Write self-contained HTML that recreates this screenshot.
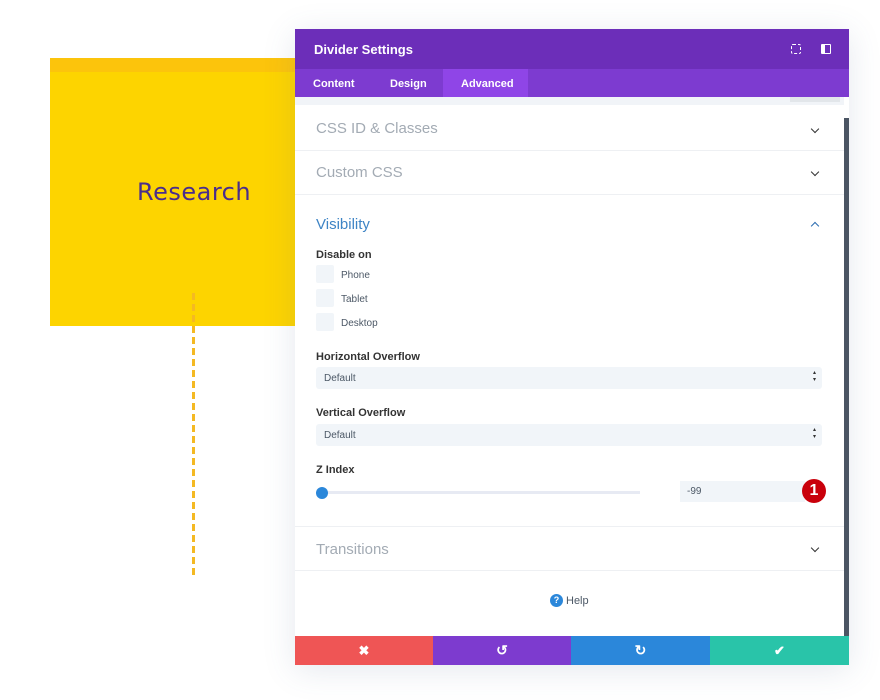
<!DOCTYPE html>
<html><head><style>
*{margin:0;padding:0;box-sizing:border-box}
body{width:880px;height:700px;background:#fff;font-family:"Liberation Sans",sans-serif;position:relative;overflow:hidden}
.abs{position:absolute}
.lbl{font-size:11px;color:#333;font-weight:bold;position:absolute;left:21px}
.sec{position:absolute;left:21px;font-size:15px;color:#a3abb4}
.cb{position:absolute;left:21px;width:18px;height:18px;background:#f1f5f9;border-radius:2px}
.cbt{position:absolute;left:46px;font-size:10px;color:#4c5866}
.sel{position:absolute;left:21px;width:506px;height:22px;background:#f1f5f9;border-radius:3px;font-size:10px;color:#4c5866;padding:6px 8px}
.sel:after{content:"\25B4\A\25BE";white-space:pre;position:absolute;right:6px;top:3px;font-size:6px;line-height:7px;color:#333}
.line{position:absolute;left:0;width:549px;height:1px;background:#eef0f3}
.chev{position:absolute;left:517px;width:6px;height:6px;border-right:1.6px solid #333;border-bottom:1.6px solid #333;transform:rotate(45deg)}
</style></head><body>
<div class="abs" style="left:50px;top:58px;width:245px;height:268px;background:#fdd400"></div>
<div class="abs" style="left:50px;top:58px;width:245px;height:14px;background:#fcc40c"></div>
<div class="abs" style="left:137px;top:178px;font-family:'DejaVu Sans',sans-serif;font-size:24px;color:#4a2d8c;letter-spacing:0.5px">Research</div>
<div class="abs" style="left:192px;top:293px;width:3px;height:285px;background:repeating-linear-gradient(#f4b923 0 7px,transparent 7px 11px)"></div>

<div class="abs" style="left:295px;top:29px;width:554px;height:636px;background:#fff;box-shadow:0 5px 30px rgba(80,100,140,.15);overflow:hidden">
 <div class="abs" style="left:0;top:0;width:554px;height:40px;background:#6c2eb9"></div>
 <div class="abs" style="left:19px;top:13px;font-size:13px;font-weight:bold;color:#fff">Divider Settings</div>
 <div class="abs" style="left:496px;top:15px;width:10px;height:10px;border:1.5px dashed #fff;border-radius:2px"></div>
 <div class="abs" style="left:526px;top:15px;width:10px;height:10px;border:1.5px solid #fff;border-radius:1px;border-left-width:4px"></div>
 <div class="abs" style="left:0;top:40px;width:554px;height:28px;background:#7d3bd0"></div>
 <div class="abs" style="left:148px;top:40px;width:85px;height:28px;background:#8f45e7"></div>
 <div class="abs" style="left:18px;top:49px;font-size:11px;font-weight:bold;color:#fff">Content</div>
 <div class="abs" style="left:95px;top:49px;font-size:11px;font-weight:bold;color:#fff">Design</div>
 <div class="abs" style="left:166px;top:49px;font-size:11px;font-weight:bold;color:#fff">Advanced</div>
 <div class="abs" style="left:0;top:68px;width:549px;height:8px;background:#f1f4f8"></div>
 <div class="abs" style="left:495px;top:68px;width:50px;height:5px;background:#e2e6ea"></div>
 <div class="abs" style="left:549px;top:89px;width:5px;height:518px;background:#4b5563"></div>
 <div style="position:absolute;left:0;top:0;width:549px">
  <div class="sec" style="top:91px">CSS ID &amp; Classes</div><div class="chev" style="top:97px"></div>
  <div class="line" style="top:121px"></div>
  <div class="sec" style="top:135px">Custom CSS</div><div class="chev" style="top:140px"></div>
  <div class="line" style="top:165px"></div>
  <div class="sec" style="top:187px;color:#3e84c5;font-size:15px">Visibility</div>
  <div class="chev" style="top:194px;transform:rotate(225deg);border-color:#2b6cb0"></div>
  <div class="lbl" style="top:220px">Disable on</div>
  <div class="cb" style="top:236px"></div><div class="cbt" style="top:241px">Phone</div>
  <div class="cb" style="top:260px"></div><div class="cbt" style="top:265px">Tablet</div>
  <div class="cb" style="top:284px"></div><div class="cbt" style="top:289px">Desktop</div>
  <div class="lbl" style="top:322px">Horizontal Overflow</div>
  <div class="sel" style="top:338px">Default</div>
  <div class="lbl" style="top:378px">Vertical Overflow</div>
  <div class="sel" style="top:395px">Default</div>
  <div class="lbl" style="top:435px">Z Index</div>
  <div class="abs" style="left:24px;top:462px;width:321px;height:3px;background:#e7eaf3"></div>
  <div class="abs" style="left:21px;top:458px;width:12px;height:12px;border-radius:50%;background:#2b87da"></div>
  <div class="abs" style="left:385px;top:452px;width:125px;height:21px;background:#f1f5f9;font-size:10px;color:#4c5866;padding:5px 7px">-99</div>
  <div class="abs" style="left:507px;top:450px;width:24px;height:24px;border-radius:50%;background:#c9000b;color:#fff;font-size:16px;font-weight:bold;text-align:center;line-height:24px">1</div>
  <div class="line" style="top:497px"></div>
  <div class="sec" style="top:512px">Transitions</div><div class="chev" style="top:516px"></div>
  <div class="line" style="top:541px"></div>
  <div class="abs" style="left:255px;top:565px;width:13px;height:13px;border-radius:50%;background:#2b87da;color:#fff;font-size:9px;font-weight:bold;text-align:center;line-height:13px">?</div>
  <div class="abs" style="left:271px;top:566px;font-size:11px;color:#4c5866">Help</div>
 </div>
 <div class="abs" style="left:0;top:607px;width:138px;height:29px;background:#ef5555;color:#fff;text-align:center;line-height:29px;font-size:13px;font-weight:bold">✖</div>
 <div class="abs" style="left:138px;top:607px;width:138px;height:29px;background:#7d3bcf;color:#fff;text-align:center;line-height:29px;font-size:14px;font-weight:bold">↺</div>
 <div class="abs" style="left:276px;top:607px;width:139px;height:29px;background:#2b87da;color:#fff;text-align:center;line-height:29px;font-size:14px;font-weight:bold">↻</div>
 <div class="abs" style="left:415px;top:607px;width:139px;height:29px;background:#29c4a9;color:#fff;text-align:center;line-height:29px;font-size:13px;font-weight:bold">✔</div>
</div>
</body></html>
